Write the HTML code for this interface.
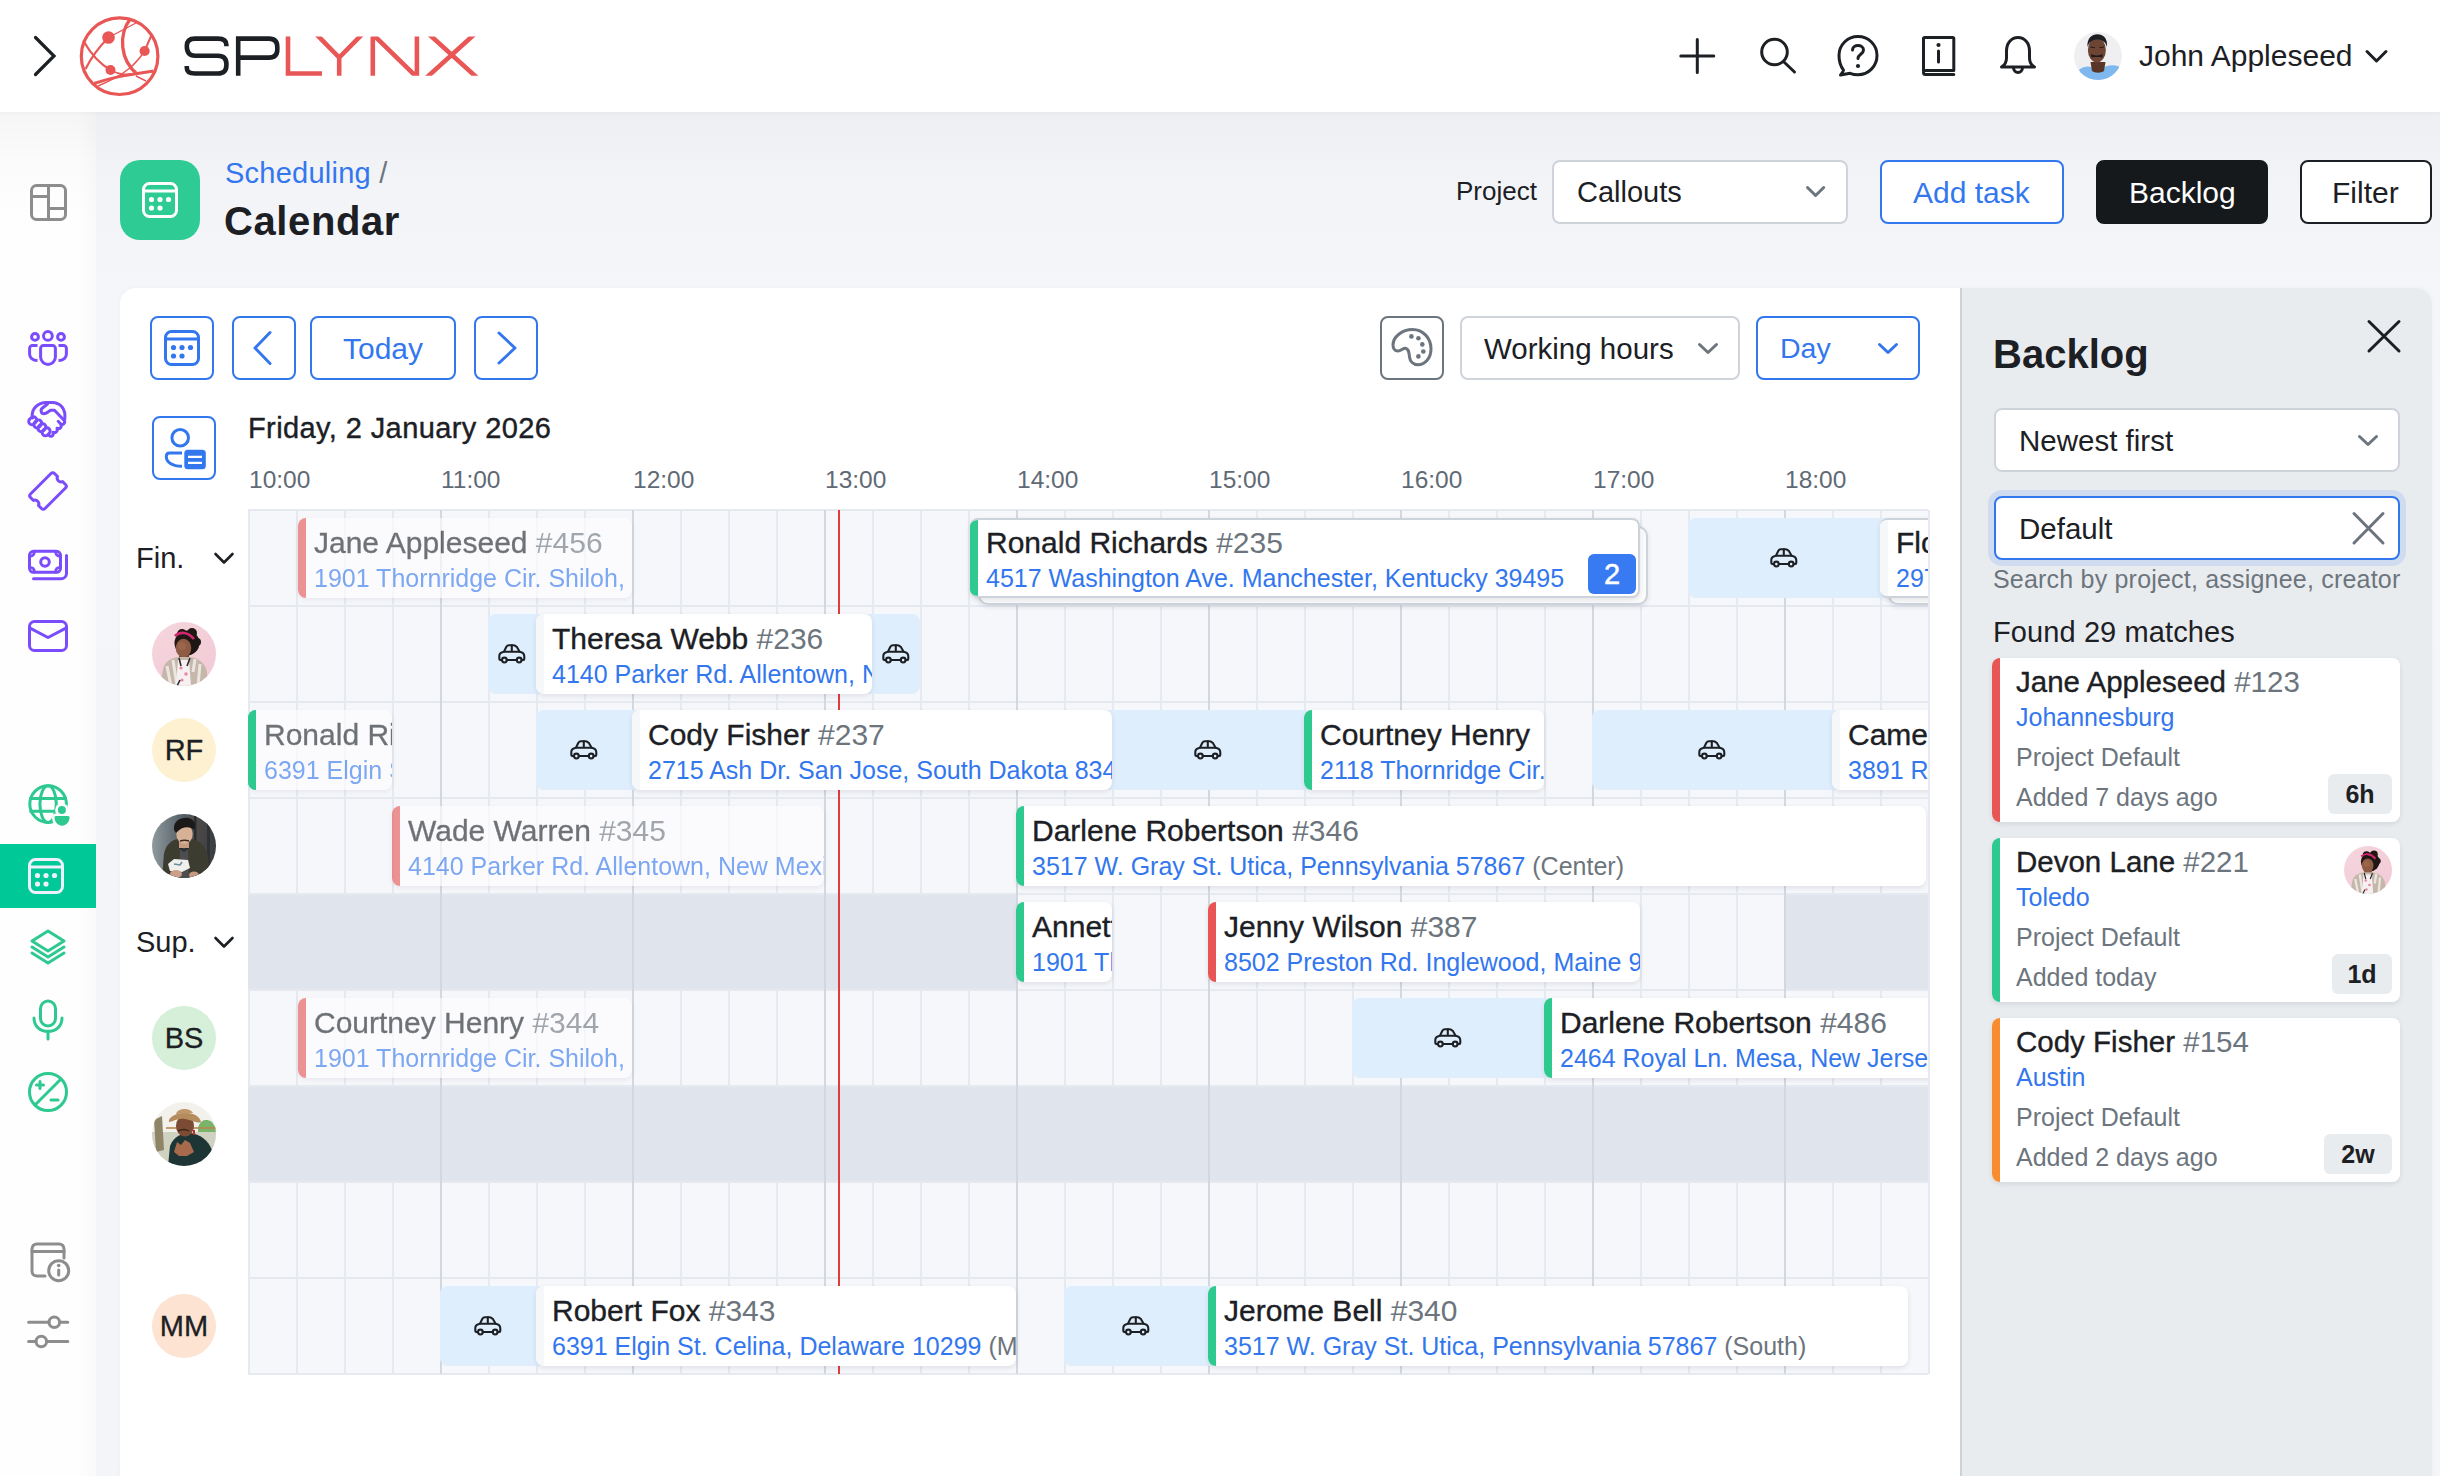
<!DOCTYPE html><html><head><meta charset="utf-8"><title>Splynx Calendar</title><style>
*{box-sizing:border-box;margin:0;padding:0}
html,body{width:2440px;height:1476px;overflow:hidden}
body{position:relative;background:#f2f3f7;font-family:"Liberation Sans", sans-serif;color:#1c2024}
.abs{position:absolute}
.t{position:absolute;white-space:nowrap;line-height:1}
svg{position:absolute;overflow:visible}
.card{position:absolute;height:80px;background:#fff;border-radius:8px;overflow:hidden;box-shadow:0 2px 5px rgba(20,30,50,.10)}
.card .acc{position:absolute;left:0;top:0;bottom:0;width:8px}
.card .tt{position:absolute;left:16px;top:12px;font-size:30px;white-space:nowrap;line-height:1;color:#1c2024;-webkit-text-stroke:0.35px #1c2024}
.card .tt i{font-style:normal;color:#6c757d;-webkit-text-stroke:0}
.card .ad{position:absolute;left:16px;top:50px;font-size:25px;white-space:nowrap;line-height:1;color:#3377ee}
.card .ad i{font-style:normal;color:#6c757d}
.past{opacity:.62}
.car{position:absolute;height:80px;background:#dfeefd;border-radius:8px}
.btn{position:absolute;border-radius:8px;border:2px solid;}
</style></head><body>
<div class="abs" style="left:0;top:112px;width:2440px;height:1364px;background:linear-gradient(180deg,#eeeff3 0px,#f3f4f8 80px,#f5f6fa 176px,#f4f5f9 100%)"></div>
<div class="abs" style="left:0;top:112px;width:96px;height:1364px;background:linear-gradient(180deg,rgba(0,0,0,.035) 0,rgba(0,0,0,.012) 50px,rgba(0,0,0,0) 110px),linear-gradient(90deg,#fefefe 0,#fefefe 78px,#f9f9fa 96px)"></div>
<div class="abs" style="left:0;top:0;width:2440px;height:112px;background:#fff;box-shadow:0 1px 4px rgba(0,0,0,.04)"></div>
<svg style="left:0;top:0" width="500" height="112" viewBox="0 0 500 112">
<polyline points="35.5,37.5 54,56 35.5,74.5" fill="none" stroke="#1c2024" stroke-width="3.2" stroke-linecap="round" stroke-linejoin="miter"/>
<g fill="none" stroke="#e85656">
<circle cx="119.6" cy="56.2" r="38.3" stroke-width="3.2"/>
<path d="M130.5 18.6 C 118 35, 120 60, 137.5 74.5" stroke-width="3.3"/>
<path d="M83.5 41 C 92 56, 100 64, 110.5 70" stroke-width="2.2"/>
<path d="M85.5 69 C 92 56, 98 48, 108.5 37.5" stroke-width="2.2"/>
<path d="M94 83.5 C 110 78, 122 75.5, 153.5 71" stroke-width="3"/>
<path d="M110.5 70 C 118 74, 126 75, 131 74" stroke-width="1.6"/>
<path d="M108.5 37.5 L 136 23" stroke-width="1.4"/>
<path d="M144.6 51 L 151.5 35" stroke-width="2"/>
<path d="M144.6 51 C 136 64, 125 75, 98 86" stroke-width="1.4"/>
<path d="M136 76 L 146 81" stroke-width="1.4"/>
</g>
<g fill="#e85656"><circle cx="108.5" cy="37.5" r="6.3"/><circle cx="144.6" cy="51" r="5.1"/><circle cx="110.5" cy="70" r="5"/></g>
<g fill="none" stroke-width="4.6" stroke-linecap="butt">
<path stroke="#1c2024" d="M226.4 46.2 L226.4 45 Q226.4 38.6 218 38.6 L195 38.6 Q186.8 38.6 186.8 46 Q186.8 55.7 195 55.7 L218 55.7 Q226.4 55.7 226.4 64 L226.4 65 Q226.4 73.5 218 73.5 L195 73.5 Q186.8 73.5 186.8 68 L186.8 65.9"/>
<path stroke="#1c2024" d="M238.2 75.7 L238.2 38.6 L269 38.6 Q277.3 38.6 277.3 47 L277.3 49.5 Q277.3 57.6 269 57.6 L238.2 57.6"/>
<path stroke="#e85656" d="M288 36.4 L288 73.5 L322 73.5"/>
<g clip-path="url(#lgclip)">
<path stroke="#e85656" d="M314.5 32.4 L339.2 57.5 L364 32.4 M339.2 57 L339.2 80"/>
<path stroke="#e85656" d="M372.8 80 L372.8 36.4 M416.9 80 L416.9 32 M370.5 32 L419.2 79.5"/>
<path stroke="#e85656" d="M427 32.4 L479 79.5 M476.5 32.4 L424.5 79.5"/>
</g>
<defs><clipPath id="lgclip"><rect x="280" y="36.4" width="210" height="39.3"/></clipPath></defs>
</g>
</svg>
<svg style="left:1660px;top:20px" width="400" height="72" viewBox="1660 20 400 72">
<g fill="none" stroke="#1c2024" stroke-width="3" stroke-linecap="round" stroke-linejoin="round">
<path d="M1697.3 39.5 V72.5 M1680.8 56 H1713.8"/>
<circle cx="1774.5" cy="52" r="12.8"/><path d="M1784 62 L1794.5 72"/>
<path d="M1843 71.5 L1840.5 75 L1850 73.3 C 1852.5 74.3 1855.2 74.8 1858 74.8 C 1868.5 74.8 1877 66.2 1877 55.5 C 1877 44.8 1868.5 36.5 1858 36.5 C 1847.5 36.5 1839 44.8 1839 55.5 C 1839 61.5 1841 66.8 1843.5 70.2"/>
<path d="M1852.5 50 C 1852.5 44 1863.5 44 1863.5 50 C 1863.5 54.5 1858 54 1858 58.5"/>
<path d="M1923.5 71 V38.5 C1923.5 37.8 1924 37.5 1924.8 37.5 H1952.5 C1953.3 37.5 1953.8 37.8 1953.8 38.5 V70.5 H1925.5 C1924.3 70.5 1923.5 71.3 1923.5 72.5 C1923.5 73.7 1924.3 74.5 1925.5 74.5 H1953.8"/>
<path d="M1938.5 51 V62"/>
<path d="M2001.5 67 C 2005 65 2006.5 62 2006.5 58 V 51 C 2006.5 43 2011.5 37.5 2018 37.5 C 2024.5 37.5 2029.5 43 2029.5 51 V 58 C 2029.5 62 2031 65 2034.5 67 Z"/>
<path d="M2013.5 67.5 C2013.5 74 2022.5 74 2022.5 67.5"/>
<path d="M2367 51.5 L2376.5 61 L2386 51.5"/>
</g>
<g fill="#1c2024"><circle cx="1858" cy="66" r="2.1"/><circle cx="1938.5" cy="45" r="2.1"/></g>
</svg>
<div class="abs" style="left:2074px;top:32px;width:48px;height:48px;border-radius:50%;overflow:hidden"><svg width="100%" height="100%" viewBox="0 0 64 64" style="position:absolute;left:0;top:0">
<rect width="64" height="64" fill="#efeff2"/>
<path d="M6 64 L7 50 C 14 45 22 44 28 50 L36 50 C 42 44 52 43 60 46 L62 64 Z" fill="#7fb8ee"/>
<path d="M22 40 L42 40 L40 52 C 36 55 28 55 24 52 Z" fill="#5a3628"/>
<ellipse cx="30.5" cy="24" rx="12" ry="16.5" fill="#6e4535"/>
<path d="M18 20 C 17 8 24 3 31 3 C 39 3 45 8 44 20 C 42 12 36 10 31 10 C 25 10 20 13 18 20 Z" fill="#1b1d22"/>
<path d="M21 34 C 24 44 37 44 40 34 C 38 40 34 41.5 30.5 41.5 C 27 41.5 23 40 21 34 Z" fill="#1a1a1c"/>
<path d="M23 29 C 26 32 35 32 38 29 L38 34 C 34 33 27 33 23 34 Z" fill="#1f1b1a"/>
<path d="M22 20 L28 21 M34 21 L40 20" stroke="#2a1a14" stroke-width="1.6"/>
</svg></div>
<div class="t" style="left:2139px;top:41px;font-size:30px;color:#1c2024">John Appleseed</div>
<svg style="left:0;top:112px" width="96" height="1364" viewBox="0 112 96 1364">
<g fill="none" stroke="#8d8d8d" stroke-width="3" stroke-linejoin="round" stroke-linecap="round">
<rect x="31.5" y="185.5" width="34" height="34" rx="5"/>
<path d="M31.5 196.5 H48.5 M48.5 185.5 V219.5 M48.5 208.5 H65.5"/>
</g>
<g fill="none" stroke="#7a4cfb" stroke-width="3" stroke-linejoin="round" stroke-linecap="round">
<circle cx="35" cy="336.9" r="3.4"/><circle cx="47.9" cy="335.9" r="4.4"/><circle cx="61" cy="336.9" r="3.4"/>
<path d="M43.5 345.4 H52.5 C54 345.4 55.4 346.8 55.4 348.3 V357 C55.4 361 52 364.5 48 364.5 C44 364.5 40.6 361 40.6 357 V348.3 C40.6 346.8 42 345.4 43.5 345.4 Z"/>
<path d="M37.5 345.4 H32.5 C31 345.4 29.6 346.8 29.6 348.3 V354 C29.6 357.5 32.5 360.6 37.5 360.6" stroke-linecap="butt"/>
<path d="M58.5 345.4 H63.5 C65 345.4 66.4 346.8 66.4 348.3 V354 C66.4 357.5 63.5 360.6 58.5 360.6" stroke-linecap="butt"/>
<path d="M32.5 418 C 30.5 409 38 402.5 46.5 402.5 H 52 C 60 402.5 66 408.5 64.8 419"/>
<path d="M47.5 404 L 42.5 408 C 40 410 41 413.8 44 413.8 C 45.5 413.8 46.8 413 48 412 L 50.5 410.3 H 54.5 L 63.8 420 C 65.8 422 64 425.5 61 424.3 L 58.2 421.3"/>
<path d="M61 424.3 C 62 427.3 59.8 429.3 57 428.3 M57 428.3 C 58 431.3 55.6 433.3 53 432.3 M53 432.3 C 54 435.8 51 437.3 49 435.5"/>
<rect x="28.5" y="417.5" width="8.5" height="6.5" rx="3.2" transform="rotate(-45 32.7 420.8)"/>
<rect x="33.5" y="420.6" width="8.5" height="6.5" rx="3.2" transform="rotate(-45 37.8 423.9)"/>
<rect x="37.7" y="424.4" width="8.5" height="6.5" rx="3.2" transform="rotate(-45 42 427.7)"/>
<rect x="41.9" y="428.5" width="8.5" height="6.5" rx="3.2" transform="rotate(-45 46.2 431.8)"/>
<path d="M50 474.5 L 30.5 494 C 29.5 495 29.5 496.5 30.5 497.5 L 33.5 500.5 C 36.5 499 40 502.5 38.5 505.5 L 41.5 508.5 C 42.5 509.5 44 509.5 45 508.5 L 65.5 488 C 66.5 487 66.5 485.5 65.5 484.5 L 62.5 481.5 C 59.5 483 56 479.5 57.5 476.5 L 54.5 473.5 C 53.5 472.5 52 472.5 51 473.5 Z"/>
<rect x="29.5" y="551.3" width="31" height="21" rx="4"/>
<circle cx="45" cy="562" r="4.3"/>
<path d="M29.5 556.3 Q 34.5 556.3 34.5 551.3 M55.5 551.3 Q 55.5 556.3 60.5 556.3 M29.5 567.3 Q 34.5 567.3 34.5 572.3 M55.5 572.3 Q 55.5 567.3 60.5 567.3" stroke-width="2.6"/>
<path d="M66.5 555.5 V573.5 C66.5 576.5 64 578.7 61 578.7 H33.5"/>
<rect x="29.5" y="621.5" width="37" height="29" rx="5"/>
<path d="M30.5 628.3 L48 637.5 L65.5 628.3"/>
</g>
<defs><mask id="gmask"><rect x="0" y="760" width="96" height="100" fill="#fff"/><circle cx="61.9" cy="810" r="6.8" fill="#000"/><path d="M54.5 817.5 C 54.5 816.5 55.3 816 56.3 816 H 67.7 C 68.7 816 69.5 816.5 69.5 817.5 C 69.5 822 66 825.7 62 825.7 C 58 825.7 54.5 822 54.5 817.5 Z" fill="#000" stroke="#000" stroke-width="5"/></mask></defs>
<g fill="none" stroke="#2dc990" stroke-width="3" mask="url(#gmask)">
<circle cx="48.1" cy="804.1" r="18.3"/><ellipse cx="48.1" cy="804.1" rx="8.2" ry="18.3"/>
<path d="M29.5 798.4 H66.7 M29.5 811.3 H66.7"/>
</g>
<g fill="#2dc990"><circle cx="61.9" cy="810" r="4"/><path d="M54.5 817.5 C 54.5 816.5 55.3 816 56.3 816 H 67.7 C 68.7 816 69.5 816.5 69.5 817.5 C 69.5 822 66 825.7 62 825.7 C 58 825.7 54.5 822 54.5 817.5 Z"/></g>
<rect x="0" y="844" width="96" height="64" fill="#00c896"/>
<g fill="none" stroke="#eef0fb" stroke-width="3" stroke-linejoin="round" stroke-linecap="round">
<rect x="29.5" y="859.5" width="33" height="33" rx="6"/><path d="M29.5 867 H62.5"/>
</g>
<g fill="#eef0fb"><circle cx="37.5" cy="875.5" r="2.6"/><circle cx="46" cy="875.5" r="2.6"/><circle cx="54.5" cy="875.5" r="2.6"/><circle cx="37.5" cy="884" r="2.6"/><circle cx="46" cy="884" r="2.6"/></g>
<g fill="none" stroke="#2dc990" stroke-width="3" stroke-linejoin="round" stroke-linecap="round">
<path d="M48 931 L 32 941 L 48 951 L 64 941 Z"/>
<path d="M32 947 L 48 957 L 64 947 M32 953 L 48 963 L 64 953"/>
<rect x="40.5" y="1001" width="15" height="25" rx="7.5"/>
<path d="M34 1018 C 34 1036 62 1036 62 1018 M48 1031 V1039"/>
<circle cx="48" cy="1092" r="18.5"/>
<path d="M35 1105 L 61 1079 M36.5 1085 H43.5 M40 1081.5 V1088.5 M51 1100 H58"/>
</g>
<g fill="none" stroke="#8d8d8d" stroke-width="3" stroke-linejoin="round" stroke-linecap="round">
<path d="M45 1276 H37 C34 1276 32 1274 32 1271 V1249 C32 1246 34 1244 37 1244 H59 C62 1244 64 1246 64 1249 V1258"/>
<path d="M32 1251.5 H64"/>
<circle cx="58.7" cy="1270.7" r="10"/><path d="M58.7 1270 V1275"/>
<path d="M28.6 1322.3 H49 M59.5 1322.3 H67.8 M28.6 1341.5 H36 M46.5 1341.5 H67.8"/>
<circle cx="54.3" cy="1322.3" r="5.3"/><circle cx="41.3" cy="1341.5" r="5.3"/>
</g>
<circle cx="58.7" cy="1265.5" r="1.8" fill="#8d8d8d"/>
</svg>
<div class="abs" style="left:120px;top:160px;width:80px;height:80px;border-radius:20px;background:#2ecb94"></div>
<svg style="left:120px;top:160px" width="80" height="80" viewBox="120 160 80 80">
<g fill="none" stroke="#fff" stroke-width="3"><rect x="143.5" y="183.5" width="33" height="33" rx="6"/><path d="M143.5 191 H176.5"/></g>
<g fill="#fff"><circle cx="151.5" cy="199.5" r="2.6"/><circle cx="160" cy="199.5" r="2.6"/><circle cx="168.5" cy="199.5" r="2.6"/><circle cx="151.5" cy="208" r="2.6"/><circle cx="160" cy="208" r="2.6"/></g>
</svg>
<div class="t" style="left:225px;top:158.5px;font-size:29px;color:#3377ee;letter-spacing:0.25px">Scheduling <span style="color:#6c757d">/</span></div>
<div class="t" style="left:224px;top:200.5px;font-size:40px;font-weight:700;color:#1c2024;letter-spacing:0.6px">Calendar</div>
<div class="t" style="left:1456px;top:178px;font-size:26px;color:#1c2024">Project</div>
<div class="btn" style="left:1552px;top:160px;width:296px;height:64px;border-color:#cfd4da;background:#fff"></div>
<div class="t" style="left:1577px;top:178px;font-size:29px;color:#1c2024">Callouts</div>
<div class="btn" style="left:1880px;top:160px;width:184px;height:64px;border-color:#3377ee;background:#fff"></div>
<div class="t" style="left:1913px;top:178px;font-size:30px;color:#3377ee">Add task</div>
<div class="btn" style="left:2096px;top:160px;width:172px;height:64px;border-color:#16191c;background:#16191c"></div>
<div class="t" style="left:2129px;top:178px;font-size:30px;color:#fff">Backlog</div>
<div class="btn" style="left:2300px;top:160px;width:132px;height:64px;border-color:#1c2024;background:#fff"></div>
<div class="t" style="left:2332px;top:178px;font-size:30px;color:#1c2024">Filter</div>
<svg style="left:0;top:0" width="2440" height="300" viewBox="0 0 2440 300"><g fill="none" stroke-width="2.6" stroke-linecap="round" stroke-linejoin="round">
<path d="M1807.5 187.5 L1815.6 195.5 L1823.7 187.5" stroke="#6c757d" stroke-width="3"/>
</g></svg>
<div class="abs" style="left:120px;top:288px;width:2312px;height:1300px;border-radius:16px;background:#fff;overflow:hidden;box-shadow:0 0 6px rgba(30,40,60,.03)">
<div class="abs" style="left:1840px;top:0;width:472px;height:1300px;background:#e9ecef;border-left:2px solid #cdd2d8"></div>
</div>
<div class="btn" style="left:150px;top:316px;width:64px;height:64px;border-color:#3377ee;background:#fff"></div>
<div class="btn" style="left:232px;top:316px;width:64px;height:64px;border-color:#3377ee;background:#fff"></div>
<div class="btn" style="left:310px;top:316px;width:146px;height:64px;border-color:#3377ee;background:#fff"></div>
<div class="btn" style="left:474px;top:316px;width:64px;height:64px;border-color:#3377ee;background:#fff"></div>
<div class="btn" style="left:152px;top:416px;width:64px;height:64px;border-color:#3377ee;background:#fff"></div>
<div class="btn" style="left:1380px;top:316px;width:64px;height:64px;border-color:#6c757d;background:#fff"></div>
<div class="btn" style="left:1460px;top:316px;width:280px;height:64px;border-color:#cfd4da;background:#fff"></div>
<div class="btn" style="left:1756px;top:316px;width:164px;height:64px;border-color:#3377ee;background:#fff"></div>
<div class="t" style="left:343px;top:334px;font-size:30px;color:#3377ee">Today</div>
<div class="t" style="left:1484px;top:334px;font-size:29.5px;color:#1c2024">Working hours</div>
<div class="t" style="left:1780px;top:334px;font-size:28.5px;color:#3377ee">Day</div>
<svg style="left:0;top:0" width="2440" height="500" viewBox="0 0 2440 500">
<g fill="none" stroke="#3377ee" stroke-width="3" stroke-linecap="round" stroke-linejoin="round">
<rect x="165.5" y="331.5" width="33" height="33" rx="6"/><path d="M165.5 339 H198.5"/>
<path d="M270 332.5 L255 348 L270 363.5"/>
<path d="M499 333 L515 348 L499 363"/>
<circle cx="180.2" cy="437.8" r="8.3"/>
<path d="M182 453 H169.5 C 167.5 453 166.3 454.5 166.3 456.8 C 166.3 462 172 466.3 182 466.3" stroke-linecap="butt"/>
<path d="M1879.5 344.5 L1888 352.5 L1896.5 344.5"/>
</g>
<g fill="#3377ee"><circle cx="173.5" cy="347.5" r="2.6"/><circle cx="182" cy="347.5" r="2.6"/><circle cx="190.5" cy="347.5" r="2.6"/><circle cx="173.5" cy="356" r="2.6"/><circle cx="182" cy="356" r="2.6"/>
<rect x="184.3" y="449.8" width="21.5" height="19.4" rx="3.5"/></g>
<g stroke="#fff" stroke-width="2.2"><path d="M188 456.9 H202 M188 462.8 H202"/></g>
<g fill="none" stroke="#495057" stroke-width="2.6" stroke-linecap="round" stroke-linejoin="round">
<path d="M1699.5 344.5 L1708 352.5 L1716.5 344.5" stroke="#6c757d" stroke-width="3"/>
</g>
<g fill="none" stroke="#6c757d" stroke-width="3" stroke-linecap="round" stroke-linejoin="round">
<path d="M1412.6 329.5 C 1423 329.5 1431 338 1431 349 C 1431 358 1425 364.7 1418 364.7 C 1413 364.7 1410 361 1409.5 357 C 1409 353 1409 349 1405.5 348.3 C 1403 348 1401 351 1398 351 C 1394.5 351 1393 348 1393 345 C 1393 337 1402 329.5 1412.6 329.5 Z"/>
</g>
<g fill="#6c757d"><circle cx="1411.4" cy="336.4" r="2.3"/><circle cx="1418.4" cy="338.3" r="2.3"/><circle cx="1422.3" cy="344.4" r="2.3"/><circle cx="1423.3" cy="351.5" r="2.3"/><circle cx="1418.4" cy="356.4" r="2.3"/></g>
</svg>
<div class="t" style="left:248px;top:414px;font-size:29px;color:#1c2024;-webkit-text-stroke:0.4px #1c2024;letter-spacing:0.4px">Friday, 2 January 2026</div>
<div class="t" style="left:249px;top:468px;font-size:24.5px;color:#5f6a74">10:00</div>
<div class="t" style="left:441px;top:468px;font-size:24.5px;color:#5f6a74">11:00</div>
<div class="t" style="left:633px;top:468px;font-size:24.5px;color:#5f6a74">12:00</div>
<div class="t" style="left:825px;top:468px;font-size:24.5px;color:#5f6a74">13:00</div>
<div class="t" style="left:1017px;top:468px;font-size:24.5px;color:#5f6a74">14:00</div>
<div class="t" style="left:1209px;top:468px;font-size:24.5px;color:#5f6a74">15:00</div>
<div class="t" style="left:1401px;top:468px;font-size:24.5px;color:#5f6a74">16:00</div>
<div class="t" style="left:1593px;top:468px;font-size:24.5px;color:#5f6a74">17:00</div>
<div class="t" style="left:1785px;top:468px;font-size:24.5px;color:#5f6a74">18:00</div>
<div class="abs" style="left:248px;top:510px;width:1680px;height:864px;background:#f6f7fb"></div>
<div class="abs" style="left:248px;top:894px;width:768px;height:96px;background:#e0e4ec"></div>
<div class="abs" style="left:1784px;top:894px;width:144px;height:96px;background:#e0e4ec"></div>
<div class="abs" style="left:248px;top:1086px;width:1680px;height:96px;background:#e0e4ec"></div>
<div class="abs" style="left:248px;top:509px;width:1680px;height:2px;background:#e6e9f0"></div>
<div class="abs" style="left:248px;top:605px;width:1680px;height:2px;background:#e6e9f0"></div>
<div class="abs" style="left:248px;top:701px;width:1680px;height:2px;background:#e6e9f0"></div>
<div class="abs" style="left:248px;top:797px;width:1680px;height:2px;background:#e6e9f0"></div>
<div class="abs" style="left:248px;top:893px;width:1680px;height:2px;background:#e6e9f0"></div>
<div class="abs" style="left:248px;top:989px;width:1680px;height:2px;background:#e6e9f0"></div>
<div class="abs" style="left:248px;top:1085px;width:1680px;height:2px;background:#e6e9f0"></div>
<div class="abs" style="left:248px;top:1181px;width:1680px;height:2px;background:#e6e9f0"></div>
<div class="abs" style="left:248px;top:1277px;width:1680px;height:2px;background:#e6e9f0"></div>
<div class="abs" style="left:248px;top:1373px;width:1680px;height:2px;background:#e6e9f0"></div>
<div class="abs" style="left:248px;top:510px;width:2px;height:384px;background:#e6e9f0"></div>
<div class="abs" style="left:248px;top:990px;width:2px;height:96px;background:#e6e9f0"></div>
<div class="abs" style="left:248px;top:1182px;width:2px;height:192px;background:#e6e9f0"></div>
<div class="abs" style="left:296px;top:510px;width:2px;height:384px;background:#e6e9f0"></div>
<div class="abs" style="left:296px;top:990px;width:2px;height:96px;background:#e6e9f0"></div>
<div class="abs" style="left:296px;top:1182px;width:2px;height:192px;background:#e6e9f0"></div>
<div class="abs" style="left:344px;top:510px;width:2px;height:384px;background:#e6e9f0"></div>
<div class="abs" style="left:344px;top:990px;width:2px;height:96px;background:#e6e9f0"></div>
<div class="abs" style="left:344px;top:1182px;width:2px;height:192px;background:#e6e9f0"></div>
<div class="abs" style="left:392px;top:510px;width:2px;height:384px;background:#e6e9f0"></div>
<div class="abs" style="left:392px;top:990px;width:2px;height:96px;background:#e6e9f0"></div>
<div class="abs" style="left:392px;top:1182px;width:2px;height:192px;background:#e6e9f0"></div>
<div class="abs" style="left:440px;top:510px;width:2px;height:864px;background:#d3d8e0"></div>
<div class="abs" style="left:488px;top:510px;width:2px;height:384px;background:#e6e9f0"></div>
<div class="abs" style="left:488px;top:990px;width:2px;height:96px;background:#e6e9f0"></div>
<div class="abs" style="left:488px;top:1182px;width:2px;height:192px;background:#e6e9f0"></div>
<div class="abs" style="left:536px;top:510px;width:2px;height:384px;background:#e6e9f0"></div>
<div class="abs" style="left:536px;top:990px;width:2px;height:96px;background:#e6e9f0"></div>
<div class="abs" style="left:536px;top:1182px;width:2px;height:192px;background:#e6e9f0"></div>
<div class="abs" style="left:584px;top:510px;width:2px;height:384px;background:#e6e9f0"></div>
<div class="abs" style="left:584px;top:990px;width:2px;height:96px;background:#e6e9f0"></div>
<div class="abs" style="left:584px;top:1182px;width:2px;height:192px;background:#e6e9f0"></div>
<div class="abs" style="left:632px;top:510px;width:2px;height:864px;background:#d3d8e0"></div>
<div class="abs" style="left:680px;top:510px;width:2px;height:384px;background:#e6e9f0"></div>
<div class="abs" style="left:680px;top:990px;width:2px;height:96px;background:#e6e9f0"></div>
<div class="abs" style="left:680px;top:1182px;width:2px;height:192px;background:#e6e9f0"></div>
<div class="abs" style="left:728px;top:510px;width:2px;height:384px;background:#e6e9f0"></div>
<div class="abs" style="left:728px;top:990px;width:2px;height:96px;background:#e6e9f0"></div>
<div class="abs" style="left:728px;top:1182px;width:2px;height:192px;background:#e6e9f0"></div>
<div class="abs" style="left:776px;top:510px;width:2px;height:384px;background:#e6e9f0"></div>
<div class="abs" style="left:776px;top:990px;width:2px;height:96px;background:#e6e9f0"></div>
<div class="abs" style="left:776px;top:1182px;width:2px;height:192px;background:#e6e9f0"></div>
<div class="abs" style="left:824px;top:510px;width:2px;height:864px;background:#d3d8e0"></div>
<div class="abs" style="left:872px;top:510px;width:2px;height:384px;background:#e6e9f0"></div>
<div class="abs" style="left:872px;top:990px;width:2px;height:96px;background:#e6e9f0"></div>
<div class="abs" style="left:872px;top:1182px;width:2px;height:192px;background:#e6e9f0"></div>
<div class="abs" style="left:920px;top:510px;width:2px;height:384px;background:#e6e9f0"></div>
<div class="abs" style="left:920px;top:990px;width:2px;height:96px;background:#e6e9f0"></div>
<div class="abs" style="left:920px;top:1182px;width:2px;height:192px;background:#e6e9f0"></div>
<div class="abs" style="left:968px;top:510px;width:2px;height:384px;background:#e6e9f0"></div>
<div class="abs" style="left:968px;top:990px;width:2px;height:96px;background:#e6e9f0"></div>
<div class="abs" style="left:968px;top:1182px;width:2px;height:192px;background:#e6e9f0"></div>
<div class="abs" style="left:1016px;top:510px;width:2px;height:864px;background:#d3d8e0"></div>
<div class="abs" style="left:1064px;top:510px;width:2px;height:576px;background:#e6e9f0"></div>
<div class="abs" style="left:1064px;top:1182px;width:2px;height:192px;background:#e6e9f0"></div>
<div class="abs" style="left:1112px;top:510px;width:2px;height:576px;background:#e6e9f0"></div>
<div class="abs" style="left:1112px;top:1182px;width:2px;height:192px;background:#e6e9f0"></div>
<div class="abs" style="left:1160px;top:510px;width:2px;height:576px;background:#e6e9f0"></div>
<div class="abs" style="left:1160px;top:1182px;width:2px;height:192px;background:#e6e9f0"></div>
<div class="abs" style="left:1208px;top:510px;width:2px;height:864px;background:#d3d8e0"></div>
<div class="abs" style="left:1256px;top:510px;width:2px;height:576px;background:#e6e9f0"></div>
<div class="abs" style="left:1256px;top:1182px;width:2px;height:192px;background:#e6e9f0"></div>
<div class="abs" style="left:1304px;top:510px;width:2px;height:576px;background:#e6e9f0"></div>
<div class="abs" style="left:1304px;top:1182px;width:2px;height:192px;background:#e6e9f0"></div>
<div class="abs" style="left:1352px;top:510px;width:2px;height:576px;background:#e6e9f0"></div>
<div class="abs" style="left:1352px;top:1182px;width:2px;height:192px;background:#e6e9f0"></div>
<div class="abs" style="left:1400px;top:510px;width:2px;height:864px;background:#d3d8e0"></div>
<div class="abs" style="left:1448px;top:510px;width:2px;height:576px;background:#e6e9f0"></div>
<div class="abs" style="left:1448px;top:1182px;width:2px;height:192px;background:#e6e9f0"></div>
<div class="abs" style="left:1496px;top:510px;width:2px;height:576px;background:#e6e9f0"></div>
<div class="abs" style="left:1496px;top:1182px;width:2px;height:192px;background:#e6e9f0"></div>
<div class="abs" style="left:1544px;top:510px;width:2px;height:576px;background:#e6e9f0"></div>
<div class="abs" style="left:1544px;top:1182px;width:2px;height:192px;background:#e6e9f0"></div>
<div class="abs" style="left:1592px;top:510px;width:2px;height:864px;background:#d3d8e0"></div>
<div class="abs" style="left:1640px;top:510px;width:2px;height:576px;background:#e6e9f0"></div>
<div class="abs" style="left:1640px;top:1182px;width:2px;height:192px;background:#e6e9f0"></div>
<div class="abs" style="left:1688px;top:510px;width:2px;height:576px;background:#e6e9f0"></div>
<div class="abs" style="left:1688px;top:1182px;width:2px;height:192px;background:#e6e9f0"></div>
<div class="abs" style="left:1736px;top:510px;width:2px;height:576px;background:#e6e9f0"></div>
<div class="abs" style="left:1736px;top:1182px;width:2px;height:192px;background:#e6e9f0"></div>
<div class="abs" style="left:1784px;top:510px;width:2px;height:864px;background:#d3d8e0"></div>
<div class="abs" style="left:1832px;top:510px;width:2px;height:384px;background:#e6e9f0"></div>
<div class="abs" style="left:1832px;top:990px;width:2px;height:96px;background:#e6e9f0"></div>
<div class="abs" style="left:1832px;top:1182px;width:2px;height:192px;background:#e6e9f0"></div>
<div class="abs" style="left:1880px;top:510px;width:2px;height:384px;background:#e6e9f0"></div>
<div class="abs" style="left:1880px;top:990px;width:2px;height:96px;background:#e6e9f0"></div>
<div class="abs" style="left:1880px;top:1182px;width:2px;height:192px;background:#e6e9f0"></div>
<div class="abs" style="left:1928px;top:510px;width:2px;height:864px;background:#e6e9f0"></div>
<div class="abs" style="left:838px;top:510px;width:2px;height:864px;background:#e03c3c"></div>
<div class="abs" style="left:248px;top:510px;width:1680px;height:876px;overflow:hidden">
<div class="abs" style="left:-248px;top:-510px;width:2440px;height:1476px">
<div class="car" style="left:1688px;top:518px;width:212px"></div>
<svg style="left:1769.2px;top:546.4px" width="29.6" height="22.2" viewBox="0 0 32 24"><g fill="none" stroke="#1c2024" stroke-width="2.25" stroke-linecap="round" stroke-linejoin="round">
<path d="M5.5 19.5 H3.5 C3 19.5 2.5 19 2.5 18 V15 C2.5 12 5 11 7.5 10.5 L10 5.5 C10.5 4.5 11.5 3.5 13 3.5 H18 C19.5 3.5 20.5 4.5 21.5 5.5 L24.5 10.5 C27.5 11 29.5 13 29.5 15.5 V18 C29.5 19 29 19.5 28.5 19.5 H26.5"/>
<path d="M10.5 19.5 H21.5 M8 10.5 H24.5 M16 3.5 V10.5"/>
<circle cx="8" cy="19.5" r="2.6"/><circle cx="24" cy="19.5" r="2.6"/></g></svg>
<div class="car" style="left:488px;top:614px;width:68px"></div>
<svg style="left:497.2px;top:642.4px" width="29.6" height="22.2" viewBox="0 0 32 24"><g fill="none" stroke="#1c2024" stroke-width="2.25" stroke-linecap="round" stroke-linejoin="round">
<path d="M5.5 19.5 H3.5 C3 19.5 2.5 19 2.5 18 V15 C2.5 12 5 11 7.5 10.5 L10 5.5 C10.5 4.5 11.5 3.5 13 3.5 H18 C19.5 3.5 20.5 4.5 21.5 5.5 L24.5 10.5 C27.5 11 29.5 13 29.5 15.5 V18 C29.5 19 29 19.5 28.5 19.5 H26.5"/>
<path d="M10.5 19.5 H21.5 M8 10.5 H24.5 M16 3.5 V10.5"/>
<circle cx="8" cy="19.5" r="2.6"/><circle cx="24" cy="19.5" r="2.6"/></g></svg>
<div class="car" style="left:852px;top:614px;width:68px"></div>
<svg style="left:881.2px;top:642.4px" width="29.6" height="22.2" viewBox="0 0 32 24"><g fill="none" stroke="#1c2024" stroke-width="2.25" stroke-linecap="round" stroke-linejoin="round">
<path d="M5.5 19.5 H3.5 C3 19.5 2.5 19 2.5 18 V15 C2.5 12 5 11 7.5 10.5 L10 5.5 C10.5 4.5 11.5 3.5 13 3.5 H18 C19.5 3.5 20.5 4.5 21.5 5.5 L24.5 10.5 C27.5 11 29.5 13 29.5 15.5 V18 C29.5 19 29 19.5 28.5 19.5 H26.5"/>
<path d="M10.5 19.5 H21.5 M8 10.5 H24.5 M16 3.5 V10.5"/>
<circle cx="8" cy="19.5" r="2.6"/><circle cx="24" cy="19.5" r="2.6"/></g></svg>
<div class="car" style="left:536px;top:710px;width:116px"></div>
<svg style="left:569.2px;top:738.4px" width="29.6" height="22.2" viewBox="0 0 32 24"><g fill="none" stroke="#1c2024" stroke-width="2.25" stroke-linecap="round" stroke-linejoin="round">
<path d="M5.5 19.5 H3.5 C3 19.5 2.5 19 2.5 18 V15 C2.5 12 5 11 7.5 10.5 L10 5.5 C10.5 4.5 11.5 3.5 13 3.5 H18 C19.5 3.5 20.5 4.5 21.5 5.5 L24.5 10.5 C27.5 11 29.5 13 29.5 15.5 V18 C29.5 19 29 19.5 28.5 19.5 H26.5"/>
<path d="M10.5 19.5 H21.5 M8 10.5 H24.5 M16 3.5 V10.5"/>
<circle cx="8" cy="19.5" r="2.6"/><circle cx="24" cy="19.5" r="2.6"/></g></svg>
<div class="car" style="left:1092px;top:710px;width:232px"></div>
<svg style="left:1193.2px;top:738.4px" width="29.6" height="22.2" viewBox="0 0 32 24"><g fill="none" stroke="#1c2024" stroke-width="2.25" stroke-linecap="round" stroke-linejoin="round">
<path d="M5.5 19.5 H3.5 C3 19.5 2.5 19 2.5 18 V15 C2.5 12 5 11 7.5 10.5 L10 5.5 C10.5 4.5 11.5 3.5 13 3.5 H18 C19.5 3.5 20.5 4.5 21.5 5.5 L24.5 10.5 C27.5 11 29.5 13 29.5 15.5 V18 C29.5 19 29 19.5 28.5 19.5 H26.5"/>
<path d="M10.5 19.5 H21.5 M8 10.5 H24.5 M16 3.5 V10.5"/>
<circle cx="8" cy="19.5" r="2.6"/><circle cx="24" cy="19.5" r="2.6"/></g></svg>
<div class="car" style="left:1592px;top:710px;width:260px"></div>
<svg style="left:1697.2px;top:738.4px" width="29.6" height="22.2" viewBox="0 0 32 24"><g fill="none" stroke="#1c2024" stroke-width="2.25" stroke-linecap="round" stroke-linejoin="round">
<path d="M5.5 19.5 H3.5 C3 19.5 2.5 19 2.5 18 V15 C2.5 12 5 11 7.5 10.5 L10 5.5 C10.5 4.5 11.5 3.5 13 3.5 H18 C19.5 3.5 20.5 4.5 21.5 5.5 L24.5 10.5 C27.5 11 29.5 13 29.5 15.5 V18 C29.5 19 29 19.5 28.5 19.5 H26.5"/>
<path d="M10.5 19.5 H21.5 M8 10.5 H24.5 M16 3.5 V10.5"/>
<circle cx="8" cy="19.5" r="2.6"/><circle cx="24" cy="19.5" r="2.6"/></g></svg>
<div class="car" style="left:1352px;top:998px;width:212px"></div>
<svg style="left:1433.2px;top:1026.4px" width="29.6" height="22.2" viewBox="0 0 32 24"><g fill="none" stroke="#1c2024" stroke-width="2.25" stroke-linecap="round" stroke-linejoin="round">
<path d="M5.5 19.5 H3.5 C3 19.5 2.5 19 2.5 18 V15 C2.5 12 5 11 7.5 10.5 L10 5.5 C10.5 4.5 11.5 3.5 13 3.5 H18 C19.5 3.5 20.5 4.5 21.5 5.5 L24.5 10.5 C27.5 11 29.5 13 29.5 15.5 V18 C29.5 19 29 19.5 28.5 19.5 H26.5"/>
<path d="M10.5 19.5 H21.5 M8 10.5 H24.5 M16 3.5 V10.5"/>
<circle cx="8" cy="19.5" r="2.6"/><circle cx="24" cy="19.5" r="2.6"/></g></svg>
<div class="car" style="left:440px;top:1286px;width:116px"></div>
<svg style="left:473.2px;top:1314.4px" width="29.6" height="22.2" viewBox="0 0 32 24"><g fill="none" stroke="#1c2024" stroke-width="2.25" stroke-linecap="round" stroke-linejoin="round">
<path d="M5.5 19.5 H3.5 C3 19.5 2.5 19 2.5 18 V15 C2.5 12 5 11 7.5 10.5 L10 5.5 C10.5 4.5 11.5 3.5 13 3.5 H18 C19.5 3.5 20.5 4.5 21.5 5.5 L24.5 10.5 C27.5 11 29.5 13 29.5 15.5 V18 C29.5 19 29 19.5 28.5 19.5 H26.5"/>
<path d="M10.5 19.5 H21.5 M8 10.5 H24.5 M16 3.5 V10.5"/>
<circle cx="8" cy="19.5" r="2.6"/><circle cx="24" cy="19.5" r="2.6"/></g></svg>
<div class="car" style="left:1064px;top:1286px;width:164px"></div>
<svg style="left:1121.2px;top:1314.4px" width="29.6" height="22.2" viewBox="0 0 32 24"><g fill="none" stroke="#1c2024" stroke-width="2.25" stroke-linecap="round" stroke-linejoin="round">
<path d="M5.5 19.5 H3.5 C3 19.5 2.5 19 2.5 18 V15 C2.5 12 5 11 7.5 10.5 L10 5.5 C10.5 4.5 11.5 3.5 13 3.5 H18 C19.5 3.5 20.5 4.5 21.5 5.5 L24.5 10.5 C27.5 11 29.5 13 29.5 15.5 V18 C29.5 19 29 19.5 28.5 19.5 H26.5"/>
<path d="M10.5 19.5 H21.5 M8 10.5 H24.5 M16 3.5 V10.5"/>
<circle cx="8" cy="19.5" r="2.6"/><circle cx="24" cy="19.5" r="2.6"/></g></svg>
<div class="card past" style="left:298px;top:518px;width:334px;">
<div class="acc" style="background:#e85555"></div>
<div class="tt" style="top:10px">Jane Appleseed <i>#456</i></div>
<div class="ad" style="top:48px">1901 Thornridge Cir. Shiloh, Hawaii 81063</div>
</div>
<div class="abs" style="left:978px;top:526px;width:670px;height:79px;border-radius:10px;background:#fbfbfc;border:2px solid #cdd3da;box-shadow:0 2px 5px rgba(20,30,50,.10)"></div>
<div class="card" style="left:970px;top:518px;width:670px;border:2px solid #cdd3da;border-left:none;">
<div class="acc" style="background:#2ec98f"></div>
<div class="tt" style="top:8px">Ronald Richards <i>#235</i></div>
<div class="ad" style="top:46px">4517 Washington Ave. Manchester, Kentucky 39495</div>
<div class="abs" style="right:2px;top:34px;width:48px;height:40px;border-radius:6px;background:#377af2;color:#fff;font-size:29px;text-align:center;line-height:40px;-webkit-text-stroke:0.5px #fff">2</div>
</div>
<div class="abs" style="left:1888px;top:526px;width:220px;height:79px;border-radius:10px;background:#fbfbfc;border:2px solid #cdd3da;box-shadow:0 2px 5px rgba(20,30,50,.10)"></div>
<div class="card" style="left:1880px;top:518px;width:220px;border:2px solid #cdd3da;border-left:none;">
<div class="acc" style="background:#f6f7f8"></div>
<div class="tt" style="top:8px">Floyd Miles <i>#238</i></div>
<div class="ad" style="top:46px">2972 Westheimer Rd. Santa Ana</div>
</div>
<div class="card" style="left:536px;top:614px;width:336px;">
<div class="acc" style="background:#f6f7f8"></div>
<div class="tt" style="top:10px">Theresa Webb <i>#236</i></div>
<div class="ad" style="top:48px">4140 Parker Rd. Allentown, New Mexico 31134</div>
</div>
<div class="card past" style="left:248px;top:710px;width:144px;">
<div class="acc" style="background:#2ec98f"></div>
<div class="tt" style="top:10px">Ronald Richards <i>#235</i></div>
<div class="ad" style="top:48px">6391 Elgin St. Celina, Delaware 10299</div>
</div>
<div class="abs" style="left:248px;top:710px;width:16px;height:80px;border-radius:8px 0 0 8px;overflow:hidden"><div class="abs" style="left:0;top:0;width:8px;height:80px;background:#2ec98f"></div></div>
<div class="card" style="left:632px;top:710px;width:480px;">
<div class="acc" style="background:#f6f7f8"></div>
<div class="tt" style="top:10px">Cody Fisher <i>#237</i></div>
<div class="ad" style="top:48px">2715 Ash Dr. San Jose, South Dakota 83475</div>
</div>
<div class="card" style="left:1304px;top:710px;width:240px;">
<div class="acc" style="background:#2ec98f"></div>
<div class="tt" style="top:10px">Courtney Henry <i></i></div>
<div class="ad" style="top:48px">2118 Thornridge Cir. Syracuse</div>
</div>
<div class="card" style="left:1832px;top:710px;width:268px;">
<div class="acc" style="background:#f6f7f8"></div>
<div class="tt" style="top:10px">Cameron Williamson <i>#240</i></div>
<div class="ad" style="top:48px">3891 Ranchview Dr. Richardson</div>
</div>
<div class="card past" style="left:392px;top:806px;width:432px;">
<div class="acc" style="background:#e85555"></div>
<div class="tt" style="top:10px">Wade Warren <i>#345</i></div>
<div class="ad" style="top:48px">4140 Parker Rd. Allentown, New Mexico 31134</div>
</div>
<div class="card" style="left:1016px;top:806px;width:910px;">
<div class="acc" style="background:#2ec98f"></div>
<div class="tt" style="top:10px">Darlene Robertson <i>#346</i></div>
<div class="ad" style="top:48px">3517 W. Gray St. Utica, Pennsylvania 57867 <i>(Center)</i></div>
</div>
<div class="card" style="left:1016px;top:902px;width:96px;">
<div class="acc" style="background:#2ec98f"></div>
<div class="tt" style="top:10px">Annette Black <i>#388</i></div>
<div class="ad" style="top:48px">1901 Thornridge Cir.</div>
</div>
<div class="card" style="left:1208px;top:902px;width:432px;">
<div class="acc" style="background:#e85555"></div>
<div class="tt" style="top:10px">Jenny Wilson <i>#387</i></div>
<div class="ad" style="top:48px">8502 Preston Rd. Inglewood, Maine 98380</div>
</div>
<div class="card past" style="left:298px;top:998px;width:334px;">
<div class="acc" style="background:#e85555"></div>
<div class="tt" style="top:10px">Courtney Henry <i>#344</i></div>
<div class="ad" style="top:48px">1901 Thornridge Cir. Shiloh, Hawaii 81063</div>
</div>
<div class="card" style="left:1544px;top:998px;width:556px;">
<div class="acc" style="background:#2ec98f"></div>
<div class="tt" style="top:10px">Darlene Robertson <i>#486</i></div>
<div class="ad" style="top:48px">2464 Royal Ln. Mesa, New Jersey 45463</div>
</div>
<div class="card" style="left:536px;top:1286px;width:480px;">
<div class="acc" style="background:#f6f7f8"></div>
<div class="tt" style="top:10px">Robert Fox <i>#343</i></div>
<div class="ad" style="top:48px">6391 Elgin St. Celina, Delaware 10299 <i>(Main)</i></div>
</div>
<div class="card" style="left:1208px;top:1286px;width:700px;">
<div class="acc" style="background:#2ec98f"></div>
<div class="tt" style="top:10px">Jerome Bell <i>#340</i></div>
<div class="ad" style="top:48px">3517 W. Gray St. Utica, Pennsylvania 57867 <i>(South)</i></div>
</div>
</div></div>
<div class="t" style="left:136px;top:544px;font-size:29px;color:#1c2024">Fin.</div>
<div class="t" style="left:136px;top:928px;font-size:29px;color:#1c2024">Sup.</div>
<svg style="left:0;top:0" width="300" height="1476" viewBox="0 0 300 1476"><g fill="none" stroke="#1c2024" stroke-width="2.6" stroke-linecap="round" stroke-linejoin="round">
<path d="M215.5 554 L224 562.5 L232.5 554"/><path d="M215.5 938 L224 946.5 L232.5 938"/></g></svg>
<div class="abs" style="left:152px;top:622px;width:64px;height:64px;border-radius:50%;overflow:hidden"><svg width="100%" height="100%" viewBox="0 0 64 64" style="position:absolute;left:0;top:0">
<defs><linearGradient id="pkw1" x1="0" y1="0" x2="1" y2="1"><stop offset="0" stop-color="#f6d6de"/><stop offset="1" stop-color="#f1c9d4"/></linearGradient></defs>
<rect width="64" height="64" fill="url(#pkw1)"/>
<ellipse cx="35" cy="21" rx="12.5" ry="12.5" fill="#1f1713"/>
<circle cx="30" cy="12" r="5" fill="#1f1713"/><circle cx="40" cy="11" r="5" fill="#1f1713"/><circle cx="45" cy="20" r="4" fill="#1f1713"/>
<rect x="27" y="30" width="10" height="10" fill="#6e4432"/>
<ellipse cx="31.5" cy="26" rx="7.8" ry="9.2" fill="#8e5c44"/>
<ellipse cx="30" cy="24" rx="4" ry="4" fill="#a26b50" opacity=".6"/>
<path d="M23 14 C 28 9 36 10 42 17" stroke="#d2266f" stroke-width="2.6" fill="none"/>
<path d="M8 64 L11 47 C 13 39 20 35.5 27 35 L38 35 C 46 36 52 40 54.5 48 L57 64 Z" fill="#c6b7ab"/>
<path d="M15 44 L19 64 M21 38 L25 64 M48 42 L46 64 M43 37 L41 50" stroke="#ece6e0" stroke-width="3" fill="none"/>
<path d="M26 38 L37 38 L39 64 L24 64 Z" fill="#f7f0f2"/>
<circle cx="29" cy="46" r="1.6" fill="#e8899c"/><circle cx="34" cy="52" r="1.8" fill="#e8899c"/><circle cx="30" cy="58" r="1.6" fill="#e8899c"/>
<path d="M27 36 L29 44 M38 36 L35 44 M28 58 L25 64" stroke="#2a2a2e" stroke-width="1.6" fill="none"/>
</svg></div>
<div class="abs" style="left:152px;top:718px;width:64px;height:64px;border-radius:50%;background:#fdf1d2;font-size:29px;line-height:64px;text-align:center;color:#1c2024;-webkit-text-stroke:0.3px #1c2024">RF</div>
<div class="abs" style="left:152px;top:814px;width:64px;height:64px;border-radius:50%;overflow:hidden"><svg width="100%" height="100%" viewBox="0 0 64 64" style="position:absolute;left:0;top:0">
<defs><linearGradient id="gmm1" x1="0" y1="0" x2="1" y2="0"><stop offset="0" stop-color="#8f9a9e"/><stop offset=".45" stop-color="#59636a"/><stop offset=".7" stop-color="#4d4a48"/><stop offset="1" stop-color="#3a3d40"/></linearGradient></defs>
<rect width="64" height="64" fill="url(#gmm1)"/>
<rect x="42" y="0" width="2.5" height="40" fill="#2a2d30"/>
<rect x="55" y="10" width="3" height="44" fill="#2e3236"/>
<path d="M10 64 L12 40 C 14 30 20 26 26 25 L40 25 C 48 27 54 32 56 42 L58 64 Z" fill="#3d3c30"/>
<path d="M28 35 L36 35 L37 64 L27 64 Z" fill="#4d4d4f"/>
<path d="M27 33 L32 37 L37 33" stroke="#1f2430" stroke-width="1.5" fill="none"/>
<rect x="27" y="24" width="10" height="10" fill="#c69d82"/>
<ellipse cx="32.5" cy="20" rx="8.2" ry="10" fill="#d6b196"/>
<path d="M22 16 C 21 6 30 3 36 4 C 43 5 44 11 42 16 C 38 12 30 12 24 19 Z" fill="#1c1a18"/>
<path d="M28 27 C 31 26 34 26 37 27" stroke="#3a2a22" stroke-width="1.4" fill="none"/>
<path d="M16 50 L22 45 L36 46 L38 54 L30 58 L18 57 Z" fill="#efefec"/>
<path d="M22 50 L28 51 L30 48" stroke="#6a8aa0" stroke-width="1.6" fill="none"/>
<ellipse cx="24" cy="60" rx="6" ry="4" fill="#caa08a"/>
<ellipse cx="42" cy="61" rx="5" ry="3.5" fill="#c49a82"/>
</svg></div>
<div class="abs" style="left:152px;top:1006px;width:64px;height:64px;border-radius:50%;background:#d5efd8;font-size:29px;line-height:64px;text-align:center;color:#1c2024;-webkit-text-stroke:0.3px #1c2024">BS</div>
<div class="abs" style="left:152px;top:1102px;width:64px;height:64px;border-radius:50%;overflow:hidden"><svg width="100%" height="100%" viewBox="0 0 64 64" style="position:absolute;left:0;top:0">
<rect width="64" height="64" fill="#f2f1ec"/>
<rect x="0" y="30" width="64" height="34" fill="#cfd2c0"/>
<path d="M2 18 L10 14 L12 48 L4 50 Z" fill="#8f8466"/>
<path d="M46 26 C 48 18 54 16 60 20 L64 26 L64 30 L46 30 Z" fill="#7ab46a"/>
<rect x="14" y="25" width="50" height="2" fill="#b8864e" opacity=".8"/>
<path d="M16 64 L18 44 C 22 34 30 31 38 31 C 48 32 56 38 60 48 L62 64 Z" fill="#1e3536"/>
<ellipse cx="33" cy="24" rx="9" ry="10.5" fill="#7b4b33"/>
<path d="M26 29 C 30 27 34 27 37 29" stroke="#3a2416" stroke-width="1.4" fill="none"/>
<path d="M17 20 C 16 16 22 12 30 11 C 40 10 48 14 49 20 C 46 22 40 18 33 17 C 26 16 20 20 17 20 Z" fill="#b58c5e"/>
<path d="M24 12 C 25 6 38 5 41 11 Z" fill="#bf976a"/>
<path d="M22 50 L25 40 L29 43 L33 38 L38 41 L42 50 L35 54 L27 54 Z" fill="#a86a4c"/>
<rect x="41" y="28" width="2" height="5" fill="#c22a2a"/>
</svg></div>
<div class="abs" style="left:152px;top:1294px;width:64px;height:64px;border-radius:50%;background:#fde3d1;font-size:29px;line-height:64px;text-align:center;color:#1c2024;-webkit-text-stroke:0.3px #1c2024">MM</div>
<div class="t" style="left:1993px;top:333.5px;font-size:40px;font-weight:700;color:#1c2024">Backlog</div>
<svg style="left:2360px;top:312px" width="50" height="50" viewBox="2360 312 50 50"><g stroke="#1c2024" stroke-width="3" stroke-linecap="round"><path d="M2369 321.5 L2399 351 M2399 321.5 L2369 351"/></g></svg>
<div class="btn" style="left:1994px;top:408px;width:406px;height:64px;border-color:#cfd4da;background:#fff"></div>
<div class="t" style="left:2019px;top:426px;font-size:29.5px;color:#1c2024">Newest first</div>
<div class="btn" style="left:1994px;top:496px;width:406px;height:64px;border-color:#3377ee;background:#fff;box-shadow:0 0 0 6px rgba(51,119,238,.14)"></div>
<div class="t" style="left:2019px;top:514px;font-size:29.5px;color:#1c2024">Default</div>
<svg style="left:1990px;top:400px" width="440" height="200" viewBox="1990 400 440 200">
<path d="M2359.5 436.5 L2368 444.5 L2376.5 436.5" fill="none" stroke="#6c757d" stroke-width="3" stroke-linecap="round" stroke-linejoin="round"/>
<g stroke="#6c757d" stroke-width="3" stroke-linecap="round"><path d="M2354 513.5 L2383 543 M2383 513.5 L2354 543"/></g></svg>
<div class="t" style="left:1993px;top:567px;font-size:25px;color:#6c757d;letter-spacing:0.2px">Search by project, assignee, creator</div>
<div class="t" style="left:1993px;top:618px;font-size:29px;color:#1c2024;letter-spacing:0.1px">Found 29 matches</div>
<div class="abs" style="left:1992px;top:658px;width:408px;height:164px;background:#fff;border-radius:8px;overflow:hidden;box-shadow:0 2px 5px rgba(20,30,50,.10)">
<div class="abs" style="left:0;top:0;width:8px;height:164px;background:#e85555"></div>
<div class="t" style="left:24px;top:9px;font-size:29.5px;color:#1c2024;-webkit-text-stroke:0.35px #1c2024">Jane Appleseed <span style="color:#6c757d;-webkit-text-stroke:0">#123</span></div>
<div class="t" style="left:24px;top:47px;font-size:25px;color:#3377ee">Johannesburg</div>
<div class="t" style="left:24px;top:87px;font-size:25px;color:#6c757d">Project Default</div>
<div class="t" style="left:24px;top:127px;font-size:25px;color:#6c757d">Added 7 days ago</div>
<div class="abs" style="left:336px;top:116px;width:64px;height:40px;border-radius:6px;background:#e9ecef;font-size:25px;font-weight:700;line-height:40px;text-align:center;color:#1c2024">6h</div>
</div>
<div class="abs" style="left:1992px;top:838px;width:408px;height:164px;background:#fff;border-radius:8px;overflow:hidden;box-shadow:0 2px 5px rgba(20,30,50,.10)">
<div class="abs" style="left:0;top:0;width:8px;height:164px;background:#2ec98f"></div>
<div class="t" style="left:24px;top:9px;font-size:29.5px;color:#1c2024;-webkit-text-stroke:0.35px #1c2024">Devon Lane <span style="color:#6c757d;-webkit-text-stroke:0">#221</span></div>
<div class="t" style="left:24px;top:47px;font-size:25px;color:#3377ee">Toledo</div>
<div class="t" style="left:24px;top:87px;font-size:25px;color:#6c757d">Project Default</div>
<div class="t" style="left:24px;top:127px;font-size:25px;color:#6c757d">Added today</div>
<div class="abs" style="left:340px;top:116px;width:60px;height:40px;border-radius:6px;background:#e9ecef;font-size:25px;font-weight:700;line-height:40px;text-align:center;color:#1c2024">1d</div>
<div class="abs" style="left:352px;top:8px;width:48px;height:48px;border-radius:50%;overflow:hidden"><svg width="100%" height="100%" viewBox="0 0 64 64" style="position:absolute;left:0;top:0">
<defs><linearGradient id="pkw2" x1="0" y1="0" x2="1" y2="1"><stop offset="0" stop-color="#f6d6de"/><stop offset="1" stop-color="#f1c9d4"/></linearGradient></defs>
<rect width="64" height="64" fill="url(#pkw2)"/>
<ellipse cx="35" cy="21" rx="12.5" ry="12.5" fill="#1f1713"/>
<circle cx="30" cy="12" r="5" fill="#1f1713"/><circle cx="40" cy="11" r="5" fill="#1f1713"/><circle cx="45" cy="20" r="4" fill="#1f1713"/>
<rect x="27" y="30" width="10" height="10" fill="#6e4432"/>
<ellipse cx="31.5" cy="26" rx="7.8" ry="9.2" fill="#8e5c44"/>
<ellipse cx="30" cy="24" rx="4" ry="4" fill="#a26b50" opacity=".6"/>
<path d="M23 14 C 28 9 36 10 42 17" stroke="#d2266f" stroke-width="2.6" fill="none"/>
<path d="M8 64 L11 47 C 13 39 20 35.5 27 35 L38 35 C 46 36 52 40 54.5 48 L57 64 Z" fill="#c6b7ab"/>
<path d="M15 44 L19 64 M21 38 L25 64 M48 42 L46 64 M43 37 L41 50" stroke="#ece6e0" stroke-width="3" fill="none"/>
<path d="M26 38 L37 38 L39 64 L24 64 Z" fill="#f7f0f2"/>
<circle cx="29" cy="46" r="1.6" fill="#e8899c"/><circle cx="34" cy="52" r="1.8" fill="#e8899c"/><circle cx="30" cy="58" r="1.6" fill="#e8899c"/>
<path d="M27 36 L29 44 M38 36 L35 44 M28 58 L25 64" stroke="#2a2a2e" stroke-width="1.6" fill="none"/>
</svg></div>
</div>
<div class="abs" style="left:1992px;top:1018px;width:408px;height:164px;background:#fff;border-radius:8px;overflow:hidden;box-shadow:0 2px 5px rgba(20,30,50,.10)">
<div class="abs" style="left:0;top:0;width:8px;height:164px;background:#f98c2e"></div>
<div class="t" style="left:24px;top:9px;font-size:29.5px;color:#1c2024;-webkit-text-stroke:0.35px #1c2024">Cody Fisher <span style="color:#6c757d;-webkit-text-stroke:0">#154</span></div>
<div class="t" style="left:24px;top:47px;font-size:25px;color:#3377ee">Austin</div>
<div class="t" style="left:24px;top:87px;font-size:25px;color:#6c757d">Project Default</div>
<div class="t" style="left:24px;top:127px;font-size:25px;color:#6c757d">Added 2 days ago</div>
<div class="abs" style="left:332px;top:116px;width:68px;height:40px;border-radius:6px;background:#e9ecef;font-size:25px;font-weight:700;line-height:40px;text-align:center;color:#1c2024">2w</div>
</div>
</body></html>
